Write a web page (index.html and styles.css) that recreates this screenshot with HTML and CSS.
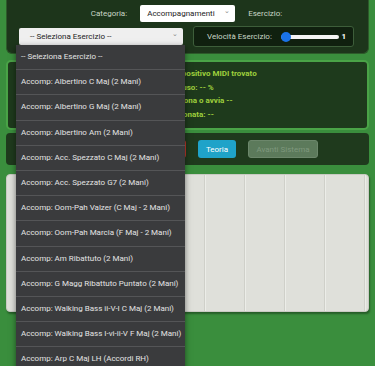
FILE: index.html
```html
<!DOCTYPE html>
<html lang="it">
<head>
  <meta charset="UTF-8">
  <meta name="viewport" content="width=device-width, initial-scale=1.0">
  <title>Esercizi Pianoforte</title>
  <link rel="stylesheet" href="styles.css">
</head>
<body>
  <div class="page">
    <div class="controls">
      <div class="row-cat">
        <span class="label">Categoria:</span>
        <div class="select select-cat">Accompagnamenti <span class="chev">&#8964;</span></div>
        <span class="label">Esercizio:</span>
      </div>
      <div class="row-ex">
        <div class="select select-ex">-- Seleziona Esercizio -- <span class="chev">&#8964;</span></div>
        <div class="speed-box">
          <span class="label">Velocità Esercizio:</span>
          <div class="slider"><div class="thumb"></div></div>
          <span class="speed-val">1</span>
        </div>
      </div>
    </div>

    <div class="status">
      <div>Nessun dispositivo MIDI trovato</div>
      <div>Precisione uso: -- %</div>
      <div>Msg: Seleziona o avvia --</div>
      <div>Ult. nota suonata: --</div>
    </div>

    <div class="actions">
      <button class="btn btn-start">Avvia Esercizio</button>
      <button class="btn btn-stop">Ferma</button>
      <button class="btn btn-theory">Teoria</button>
      <button class="btn btn-next" disabled>Avanti Sistema</button>
    </div>

    <div class="piano">
      <div class="keys">
        <div class="key"></div><div class="key"></div><div class="key"></div>
        <div class="key"></div><div class="key"></div><div class="key"></div>
        <div class="key"></div><div class="key"></div><div class="key"></div>
        <div class="key"></div>
      </div>
    </div>
  </div>

  <ul class="dropdown">
    <li>-- Seleziona Esercizio --</li>
    <li>Accomp: Albertino C Maj (2 Mani)</li>
    <li>Accomp: Albertino G Maj (2 Mani)</li>
    <li>Accomp: Albertino Am (2 Mani)</li>
    <li>Accomp: Acc. Spezzato C Maj (2 Mani)</li>
    <li>Accomp: Acc. Spezzato G7 (2 Mani)</li>
    <li>Accomp: Oom-Pah Valzer (C Maj - 2 Mani)</li>
    <li>Accomp: Oom-Pah Marcia (F Maj - 2 Mani)</li>
    <li>Accomp: Am Ribattuto (2 Mani)</li>
    <li>Accomp: G Magg Ribattuto Puntato (2 Mani)</li>
    <li>Accomp: Walking Bass ii-V-I C Maj (2 Mani)</li>
    <li>Accomp: Walking Bass I-vi-ii-V F Maj (2 Mani)</li>
    <li>Accomp: Arp C Maj LH (Accordi RH)</li>
  </ul>
</body>
</html>
```

FILE: styles.css
```css
* {
  margin: 0;
  padding: 0;
  box-sizing: border-box;
}

html, body {
  height: 100%;
  overflow: hidden;
}

body {
  background: #3a8e3d;
  font-family: Roboto, 'Noto Sans', sans-serif;
  font-size: 8px;
  color: #e6e6e6;
  position: relative;
}

.page {
  padding: 0 6px;
}

.controls {
  background: #1d351b;
  border: 1px solid #2d5a2a;
  border-top: none;
  border-radius: 0 0 6px 6px;
  padding: 5px 14px 6px 12px;
  display: flex;
  flex-direction: column;
  gap: 4px;
}

.row-cat {
  display: flex;
  justify-content: center;
  align-items: center;
  gap: 13px;
  height: 17px;
}

.label {
  color: #c9d6c6;
  white-space: nowrap;
}

.select {
  background: #fff;
  color: #222;
  border-radius: 2px;
  height: 17px;
  display: flex;
  align-items: center;
  justify-content: space-between;
  padding: 0 5px 0 7px;
  white-space: nowrap;
}

.select-cat {
  width: 95px;
}

.select-ex {
  width: 164px;
  flex-shrink: 0;
  background: #efefef;
  padding-left: 11px;
}

.chev {
  color: #888;
  font-size: 7px;
  line-height: 1;
  margin-top: -4px;
}

.row-ex {
  display: flex;
  align-items: center;
  gap: 10px;
}

.speed-box {
  width: 161px;
  flex-shrink: 0;
  height: 21px;
  background: #10200f;
  border: 1px solid #3d5e3a;
  border-radius: 3px;
  display: flex;
  align-items: center;
  padding: 0 7px 0 13px;
}

.slider {
  flex: 0 0 58px;
  height: 4px;
  background: #f4f4f4;
  border-radius: 2px;
  margin-left: 9px;
  position: relative;
}

.thumb {
  position: absolute;
  left: 0;
  top: -3px;
  width: 10px;
  height: 10px;
  border-radius: 50%;
  background: #1a73e8;
}

.speed-val {
  margin-left: auto;
  color: #fff;
  font-weight: bold;
}

.status {
  margin-top: 6px;
  height: 70px;
  background: #1e3a1c;
  border: 2px solid #4aa347;
  border-radius: 5px;
  padding: 5px 0 0 134px;
  color: #9fd03c;
  font-weight: bold;
  line-height: 13.7px;
  white-space: nowrap;
}

.actions {
  margin-top: 3px;
  height: 32px;
  background: #1f3a1d;
  border-radius: 4px;
  display: flex;
  justify-content: center;
  align-items: center;
  gap: 12px;
}

.btn {
  flex-shrink: 0;
  height: 18px;
  border: none;
  border-radius: 3px;
  padding: 0;
  font-family: inherit;
  font-size: 8px;
  color: #fff;
  background: #2f7d32;
  white-space: nowrap;
}

.btn-start {
  width: 74px;
}

.btn-stop {
  width: 43px;
  background: #c0392b;
}

.btn-theory {
  width: 38px;
  background: #1fa3c9;
}

.btn-next {
  width: 70px;
  background: #5c7a5b;
  color: #7e987d;
  border: 1px solid #6c876b;
}

.piano {
  margin-top: 9px;
  height: 138px;
  background: #dfe0da;
  border: 1px solid #c9cac3;
  border-radius: 4px;
  box-shadow: 1px 2px 2px rgba(0, 0, 0, 0.35);
  overflow: hidden;
}

.keys {
  display: flex;
  height: 100%;
  margin-left: -2px;
}

.key {
  flex: 0 0 40px;
  border-right: 1px solid #cfd0c9;
  box-shadow: 1px 0 0 #ecede8;
}

.dropdown {
  list-style: none;
  position: absolute;
  left: 16px;
  top: 45px;
  width: 169px;
  background: #3a3b3d;
  box-shadow: 0 2px 6px rgba(0, 0, 0, 0.5);
}

.dropdown li {
  height: 25.2px;
  line-height: 24.2px;
  padding-left: 5px;
  border-bottom: 1px solid #545557;
  color: #e4e4e4;
  white-space: nowrap;
}
```
